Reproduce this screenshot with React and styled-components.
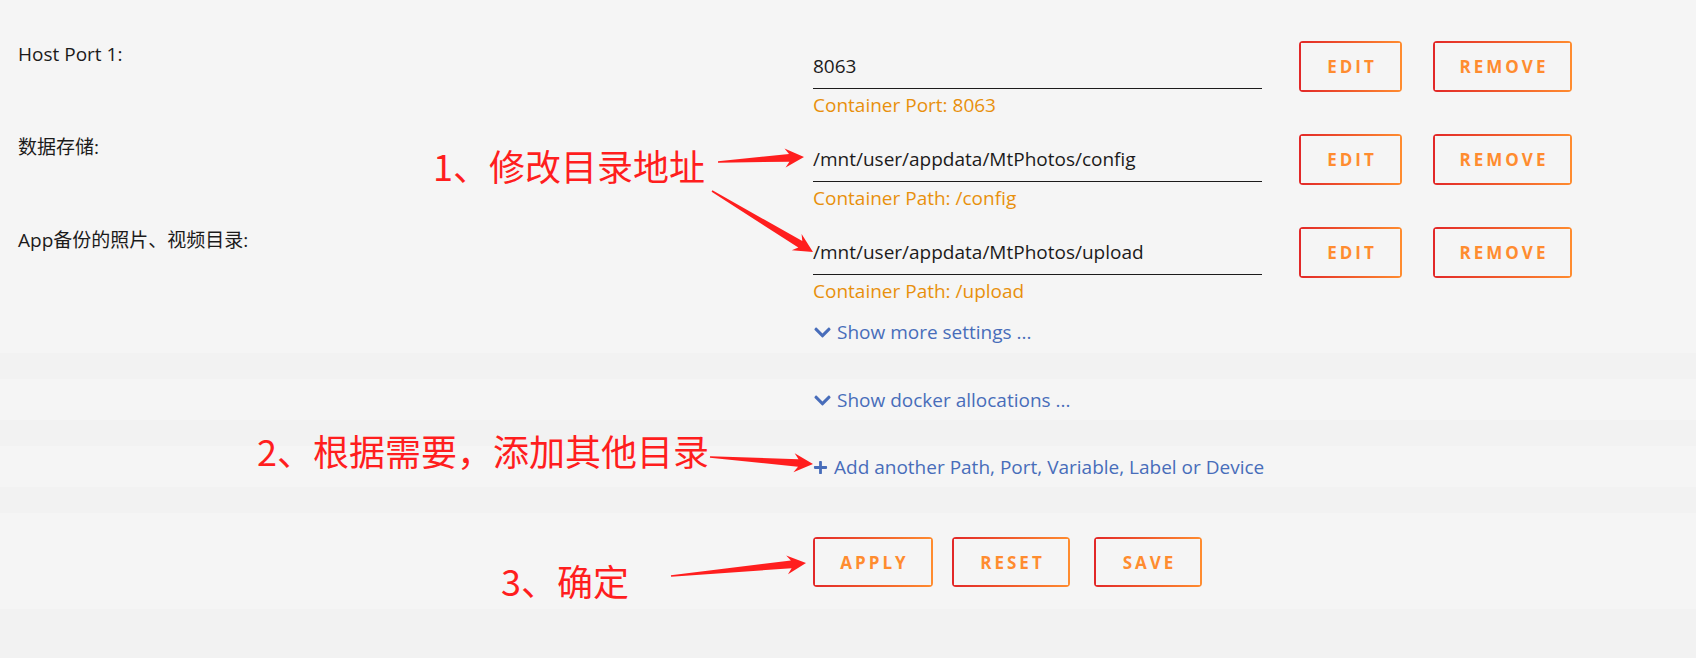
import styled, { createGlobalStyle } from 'styled-components';
import { FaChevronDown, FaPlus } from 'react-icons/fa';

const GlobalStyle = createGlobalStyle`
  html, body {
    margin: 0;
    padding: 0;
    background: #f2f2f2;
  }
  body {
    font-family: "Open Sans", "Noto Sans CJK SC", sans-serif;
    color: #1c1b1b;
  }
  * {
    box-sizing: border-box;
  }
`;

const Page = styled.div`
  position: relative;
  width: 1696px;
  height: 658px;
  overflow: hidden;
  background: #f2f2f2;
`;

const Section = styled.section`
  background: #f5f5f5;
  padding-top: ${(p) => p.$pt}px;
  padding-bottom: ${(p) => p.$pb}px;
  margin-bottom: 26px;
`;

const Row = styled.div`
  display: grid;
  grid-template-columns: 795px 1fr;
  padding-left: 18px;
`;

const FieldRow = styled(Row)`
  height: 93px;
`;

const Label = styled.div`
  padding-top: 12px;
  font-size: 19px;
  line-height: 24px;
`;

const ValueCell = styled.div`
  display: flex;
  align-items: flex-start;
`;

const InputWrap = styled.div`
  width: 449px;
  margin-right: 37px;
`;

const TextInput = styled.input`
  display: block;
  width: 100%;
  height: 45px;
  margin-top: 14px;
  padding: 0;
  border: 0;
  border-bottom: 1px solid #1c1b1b;
  background: transparent;
  font-family: inherit;
  font-size: 19px;
  color: #1c1b1b;
  outline: none;
`;

const Hint = styled.div`
  margin-top: 4px;
  font-size: 19px;
  line-height: 24px;
  color: #e8900c;
`;

const ButtonGroup = styled.div`
  display: flex;
  gap: ${(p) => p.$gap}px;
  margin-top: ${(p) => p.$mt || 0}px;
`;

const ActionButton = styled.button`
  width: ${(p) => p.$w}px;
  height: ${(p) => p.$h || 51}px;
  margin-left: ${(p) => p.$ml || 0}px;
  padding: 0 0 0 3px;
  border: 0;
  border-radius: 4px;
  font-family: "Open Sans", sans-serif;
  font-size: 17px;
  font-weight: 700;
  letter-spacing: 3px;
  text-transform: uppercase;
  color: #ff8c2f;
  cursor: pointer;
  background:
    linear-gradient(90deg, #e22828 0, #ff8c2f) 0 0 / 100% 2px no-repeat,
    linear-gradient(90deg, #e22828 0, #ff8c2f) 0 100% / 100% 2px no-repeat,
    linear-gradient(#e22828, #e22828) 0 0 / 2px 100% no-repeat,
    linear-gradient(#ff8c2f, #ff8c2f) 100% 0 / 2px 100% no-repeat;
`;

const LinkLine = styled.a`
  display: flex;
  align-items: center;
  gap: ${(p) => p.$gap}px;
  height: 24px;
  font-size: 19px;
  line-height: 24px;
  color: #486dba;
  text-decoration: none;
  cursor: pointer;

  svg {
    flex: none;
  }
`;

const MoreLink = styled(LinkLine)`
  margin-top: 11px;
`;

const Footer = styled.div`
  height: 49px;
`;

const Note = styled.div`
  position: absolute;
  left: ${(p) => p.$x}px;
  top: ${(p) => p.$y}px;
  font-family: "Noto Sans CJK SC", sans-serif;
  font-size: 36px;
  line-height: 36px;
  color: #ff1e1e;
  white-space: nowrap;
  pointer-events: none;
`;

const Overlay = styled.svg`
  position: absolute;
  left: 0;
  top: 0;
  pointer-events: none;
`;

const fields = [
  { label: 'Host Port 1:', value: '8063', hint: 'Container Port: 8063' },
  { label: '数据存储:', value: '/mnt/user/appdata/MtPhotos/config', hint: 'Container Path: /config' },
  { label: 'App备份的照片、视频目录:', value: '/mnt/user/appdata/MtPhotos/upload', hint: 'Container Path: /upload' },
];

// tail -> tip, tapered shaft with a barbed head
const arrows = [
  { from: [718, 162], to: [804, 157] },
  { from: [712, 191], to: [813, 252] },
  { from: [710, 457], to: [813, 464] },
  { from: [671, 576], to: [806, 563] },
];

const arrowPoints = ({ from, to }) => {
  const [x1, y1] = from;
  const [x2, y2] = to;
  const len = Math.hypot(x2 - x1, y2 - y1);
  const ux = (x2 - x1) / len;
  const uy = (y2 - y1) / len;
  const nx = -uy;
  const ny = ux;
  const head = 19;
  const wing = 9.5;
  const neck = 3.8;
  const tail = 0.8;
  const jx = x2 - ux * head * 0.78;
  const jy = y2 - uy * head * 0.78;
  const bx = x2 - ux * head;
  const by = y2 - uy * head;
  const pts = [
    [x1 + nx * tail, y1 + ny * tail],
    [jx + nx * neck, jy + ny * neck],
    [bx + nx * wing, by + ny * wing],
    [x2, y2],
    [bx - nx * wing, by - ny * wing],
    [jx - nx * neck, jy - ny * neck],
    [x1 - nx * tail, y1 - ny * tail],
  ];
  return pts.map((p) => p.map((v) => v.toFixed(1)).join(',')).join(' ');
};

export default function App() {
  return (
    <>
      <GlobalStyle />
      <Page>
        <Section $pt={30} $pb={9}>
          {fields.map((f) => (
            <FieldRow key={f.label}>
              <Label>{f.label}</Label>
              <ValueCell>
                <InputWrap>
                  <TextInput value={f.value} readOnly />
                  <Hint>{f.hint}</Hint>
                </InputWrap>
                <ButtonGroup $gap={31} $mt={11}>
                  <ActionButton $w={103}>Edit</ActionButton>
                  <ActionButton $w={139}>Remove</ActionButton>
                </ButtonGroup>
              </ValueCell>
            </FieldRow>
          ))}
          <Row>
            <div />
            <MoreLink $gap={5}>
              <FaChevronDown size={19} />
              Show more settings ...
            </MoreLink>
          </Row>
        </Section>

        <Section $pt={9} $pb={8}>
          <Row>
            <div />
            <LinkLine $gap={5}>
              <FaChevronDown size={19} />
              Show docker allocations ...
            </LinkLine>
          </Row>
        </Section>

        <Section $pt={9} $pb={8}>
          <Row>
            <div />
            <LinkLine $gap={6}>
              <FaPlus size={15} />
              Add another Path, Port, Variable, Label or Device
            </LinkLine>
          </Row>
        </Section>

        <Section $pt={24} $pb={22}>
          <Row>
            <div />
            <ButtonGroup $gap={19}>
              <ActionButton $w={120} $h={50}>Apply</ActionButton>
              <ActionButton $w={118} $h={50}>Reset</ActionButton>
              <ActionButton $w={108} $h={50} $ml={5}>Save</ActionButton>
            </ButtonGroup>
          </Row>
        </Section>
        <Footer />

        <Note $x={433} $y={147}>1、修改目录地址</Note>
        <Note $x={257} $y={432}>2、根据需要，添加其他目录</Note>
        <Note $x={501} $y={562}>3、确定</Note>

        <Overlay width="1696" height="658" viewBox="0 0 1696 658">
          {arrows.map((a, i) => (
            <polygon key={i} points={arrowPoints(a)} fill="#ff1e1e" />
          ))}
        </Overlay>
      </Page>
    </>
  );
}
